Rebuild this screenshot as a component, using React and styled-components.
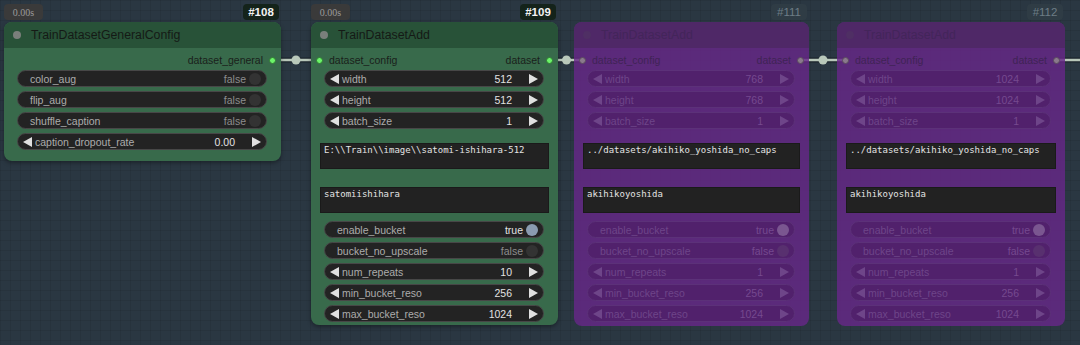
import React from 'react';
import styled, { createGlobalStyle, css } from 'styled-components';

const GlobalStyle = createGlobalStyle`
    html, body {
        margin: 0;
        padding: 0;
        background: #2a3742;
    }
    body {
        font-family: "Liberation Sans", Arial, sans-serif;
    }
`;

const Canvas = styled.div`
    position: relative;
    width: 1080px;
    height: 345px;
    overflow: hidden;
    background-color: #2a3742;
    background-image:
        linear-gradient(rgba(0,0,0,0.08) 1px, transparent 1px),
        linear-gradient(90deg, rgba(0,0,0,0.08) 1px, transparent 1px);
    background-size: 10px 10px;
`;

const Links = styled.svg`
    position: absolute;
    left: 0;
    top: 0;
`;

// nodes sit on a free canvas, so their place is the content itself
const Node = styled.div`
    position: absolute;
    box-sizing: border-box;
    display: flex;
    flex-direction: column;
    border-radius: 8px;
    background: ${p => p.$bypass ? 'rgba(103,39,136,0.82)' : '#386a4b'};
    box-shadow: ${p => p.$bypass ? 'none' : '0 2px 4px rgba(0,0,0,0.35)'};
`;

const TitleBar = styled.div`
    height: 26px;
    flex: none;
    display: flex;
    align-items: center;
    gap: 10px;
    padding-left: 9px;
    border-radius: 8px 8px 0 0;
    background: ${p => p.$bypass ? 'rgba(78,40,100,0.85)' : '#285238'};
    font-size: 12.3px;
    color: ${p => p.$bypass ? '#43255a' : '#151a16'};
`;

const TitleDot = styled.span`
    width: 8px;
    height: 8px;
    border-radius: 50%;
    background: ${p => p.$bypass ? '#4f2f64' : '#7a7f7b'};
`;

const Badge = styled.div`
    position: absolute;
    top: -18px;
    height: 16px;
    box-sizing: border-box;
    display: flex;
    align-items: center;
    justify-content: center;
    border-radius: 4px;
    ${p => p.$kind === 'time' ? css`
        left: 0;
        width: 39px;
        background: #3a3a3a;
        color: #9a9a9a;
        font-family: "Liberation Serif", serif;
        font-size: 10px;
    ` : css`
        right: 2px;
        width: 36px;
        background: ${p.$bypass ? '#2f3c45' : '#14231a'};
        color: ${p.$bypass ? '#6d7c86' : '#f2f2f2'};
        font-size: 11.5px;
        font-weight: ${p.$bypass ? 400 : 700};
    `}
`;

const Body = styled.div`
    display: flex;
    flex-direction: column;
    padding: 4px 0 ${p => p.$pb}px;
`;

const SlotRow = styled.div`
    height: 16px;
    margin-bottom: 2px;
    display: flex;
    align-items: center;
    padding: 0 5px;
    font-size: 10.5px;
    color: ${p => p.$bypass ? '#3f2355' : '#1a1f1b'};
`;

const Slot = styled.span`
    display: flex;
    align-items: center;
    gap: 6px;
    margin-left: ${p => p.$out ? 'auto' : '0'};
`;

const SlotDot = styled.span`
    width: 7px;
    height: 7px;
    border-radius: 50%;
    box-sizing: border-box;
    background: ${p => p.$bypass ? '#8a7a8c' : '#6cf46a'};
    border: 1px solid ${p => p.$bypass ? '#5a4a5e' : '#2f7a33'};
`;

const Widget = styled.div`
    height: 17px;
    box-sizing: border-box;
    margin: ${p => p.$mt}px 14px 0 13px;
    display: flex;
    align-items: center;
    padding: ${p => p.$kind === 'bool' ? '0 5px 0 12px' : '0 5px'};
    border-radius: 9px;
    font-size: 10.5px;
    background: ${p => p.$bypass ? 'rgba(80,32,106,0.9)' : '#232323'};
    border: 1px solid ${p => p.$bypass ? '#5c3179' : '#474747'};
`;

const Label = styled.span`
    flex: 1;
    margin-left: ${p => p.$kind === 'num' ? '3px' : '0'};
    color: ${p => p.$bypass ? '#6e4589' : '#acacac'};
    white-space: nowrap;
`;

const Value = styled.span`
    color: ${p => p.$bypass ? '#75498f' : (p.$dim ? '#8d8d8d' : '#e2e2e2')};
`;

const Arrow = styled.span`
    width: 0;
    height: 0;
    border-top: 5px solid transparent;
    border-bottom: 5px solid transparent;
    ${p => p.$right
        ? css`border-left: 9px solid ${p.$bypass ? '#6e4589' : '#e0e0e0'}; margin-left: 17px;`
        : css`border-right: 9px solid ${p.$bypass ? '#6e4589' : '#e0e0e0'};`}
`;

const Toggle = styled.span`
    width: 12px;
    height: 12px;
    border-radius: 50%;
    margin-left: 3px;
    background: ${p => p.$bypass
        ? (p.$on ? '#7a5690' : '#58306f')
        : (p.$on ? '#8a9bb0' : '#333333')};
`;

const TextBox = styled.div`
    height: 26px;
    box-sizing: border-box;
    margin: ${p => p.$mt}px 9px 0 9px;
    padding: 1px 3px;
    background: #222222;
    border: 1px solid #1a1a1a;
    font-family: "DejaVu Sans Mono", "Liberation Mono", monospace;
    font-size: 9px;
    color: #e4e4e4;
    white-space: nowrap;
    overflow: hidden;
`;

const generalItems = [
    { kind: 'bool', label: 'color_aug', value: false },
    { kind: 'bool', label: 'flip_aug', value: false },
    { kind: 'bool', label: 'shuffle_caption', value: false },
    { kind: 'num', label: 'caption_dropout_rate', value: '0.00' },
];

const datasetItems = (w, path, token, repeats) => [
    { kind: 'num', label: 'width', value: w },
    { kind: 'num', label: 'height', value: w },
    { kind: 'num', label: 'batch_size', value: '1' },
    { kind: 'text', value: path, mt: 14 },
    { kind: 'text', value: token, mt: 18 },
    { kind: 'bool', label: 'enable_bucket', value: true, mt: 8 },
    { kind: 'bool', label: 'bucket_no_upscale', value: false },
    { kind: 'num', label: 'num_repeats', value: repeats },
    { kind: 'num', label: 'min_bucket_reso', value: '256' },
    { kind: 'num', label: 'max_bucket_reso', value: '1024' },
];

const nodes = [
    {
        id: '#108', title: 'TrainDatasetGeneralConfig', time: true,
        left: 4, top: 22, width: 277, height: 139, pb: 11,
        output: 'dataset_general', items: generalItems,
    },
    {
        id: '#109', title: 'TrainDatasetAdd', time: true,
        left: 311, top: 22, width: 247, height: 303, pb: 3,
        input: 'dataset_config', output: 'dataset',
        items: datasetItems('512', 'E:\\\\Train\\\\image\\\\satomi-ishihara-512', 'satomiishihara', '10'),
    },
    {
        id: '#111', title: 'TrainDatasetAdd', bypass: true,
        left: 574, top: 22, width: 235, height: 304, pb: 3,
        input: 'dataset_config', output: 'dataset',
        items: datasetItems('768', '../datasets/akihiko_yoshida_no_caps', 'akihikoyoshida', '1'),
    },
    {
        id: '#112', title: 'TrainDatasetAdd', bypass: true,
        left: 837, top: 22, width: 228, height: 304, pb: 3,
        input: 'dataset_config', output: 'dataset',
        items: datasetItems('1024', '../datasets/akihiko_yoshida_no_caps', 'akihikoyoshida', '1'),
    },
];

const links = [
    { x1: 272, x2: 320 },
    { x1: 550, x2: 583 },
    { x1: 800, x2: 846 },
    { x1: 1056, x2: 1100 },
];

const Item = ({ item, bypass, first }) => {
    const mt = item.mt !== undefined ? item.mt : (first ? 0 : 4);

    if (item.kind === 'text') {
        return <TextBox $mt={mt}>{item.value}</TextBox>;
    }

    if (item.kind === 'bool') {
        return (
            <Widget $kind="bool" $mt={mt} $bypass={bypass}>
                <Label $bypass={bypass}>{item.label}</Label>
                <Value $bypass={bypass} $dim={!item.value}>{item.value ? 'true' : 'false'}</Value>
                <Toggle $on={item.value} $bypass={bypass} />
            </Widget>
        );
    }

    return (
        <Widget $kind="num" $mt={mt} $bypass={bypass}>
            <Arrow $bypass={bypass} />
            <Label $kind="num" $bypass={bypass}>{item.label}</Label>
            <Value $bypass={bypass}>{item.value}</Value>
            <Arrow $right $bypass={bypass} />
        </Widget>
    );
};

const GraphNode = ({ node }) => {
    const bypass = !!node.bypass;

    return (
        <Node
            $bypass={bypass}
            style={{ left: node.left, top: node.top, width: node.width, height: node.height }}
        >
            {node.time ? <Badge $kind="time">0.00s</Badge> : null}
            <Badge $bypass={bypass}>{node.id}</Badge>

            <TitleBar $bypass={bypass}>
                <TitleDot $bypass={bypass} />
                {node.title}
            </TitleBar>

            <Body $pb={node.pb}>
                <SlotRow $bypass={bypass}>
                    {node.input ? (
                        <Slot>
                            <SlotDot $bypass={bypass} />
                            {node.input}
                        </Slot>
                    ) : null}
                    <Slot $out>
                        {node.output}
                        <SlotDot $bypass={bypass} />
                    </Slot>
                </SlotRow>

                {node.items.map((item, i) => (
                    <Item key={i} item={item} bypass={bypass} first={i === 0} />
                ))}
            </Body>
        </Node>
    );
};

const App = () => {
    return (
        <>
            <GlobalStyle />
            <Canvas>
                <Links width="1080" height="345">
                    {links.map((l, i) => (
                        <g key={i}>
                            <line x1={l.x1} y1="60" x2={l.x2} y2="60" stroke="rgba(0,0,0,0.35)" strokeWidth="5" />
                            <line x1={l.x1} y1="60" x2={l.x2} y2="60" stroke="#b9c8ba" strokeWidth="2.5" />
                            {l.x2 < 1080 ? (
                                <circle cx={(l.x1 + l.x2) / 2} cy="60" r="4.5" fill="#b9c8ba" />
                            ) : null}
                        </g>
                    ))}
                </Links>
                {nodes.map(node => <GraphNode key={node.id} node={node} />)}
            </Canvas>
        </>
    );
};

export default App;
